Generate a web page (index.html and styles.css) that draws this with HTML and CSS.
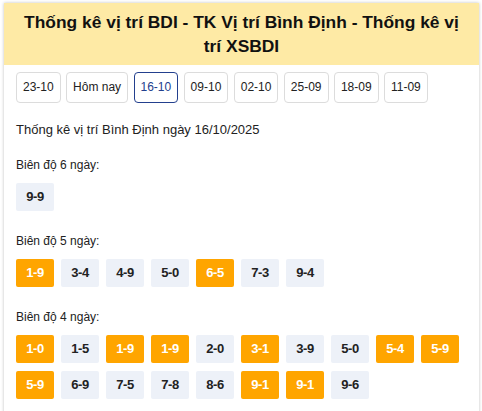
FILE: index.html
```html
<!DOCTYPE html>
<html lang="vi">
<head>
<meta charset="utf-8">
<title>Thống kê vị trí BDI</title>
<link rel="stylesheet" href="styles.css">
</head>
<body>
<div class="panel">
  <h1 class="title">Thống kê vị trí BDI - TK Vị trí Bình Định - Thống kê vị trí XSBDI</h1>
  <div class="content">
    <div class="dates">
      <a class="date">23-10</a>
      <a class="date">Hôm nay</a>
      <a class="date active">16-10</a>
      <a class="date">09-10</a>
      <a class="date">02-10</a>
      <a class="date">25-09</a>
      <a class="date">18-09</a>
      <a class="date">11-09</a>
    </div>
    <p class="heading">Thống kê vị trí Bình Định ngày 16/10/2025</p>
    <div class="group">
      <div class="label">Biên độ 6 ngày:</div>
      <div class="pairs">
        <span class="pair">9-9</span>
      </div>
    </div>
    <div class="group">
      <div class="label">Biên độ 5 ngày:</div>
      <div class="pairs">
        <span class="pair hot">1-9</span>
        <span class="pair">3-4</span>
        <span class="pair">4-9</span>
        <span class="pair">5-0</span>
        <span class="pair hot">6-5</span>
        <span class="pair">7-3</span>
        <span class="pair">9-4</span>
      </div>
    </div>
    <div class="group">
      <div class="label">Biên độ 4 ngày:</div>
      <div class="pairs">
        <span class="pair hot">1-0</span>
        <span class="pair">1-5</span>
        <span class="pair hot">1-9</span>
        <span class="pair hot">1-9</span>
        <span class="pair">2-0</span>
        <span class="pair hot">3-1</span>
        <span class="pair">3-9</span>
        <span class="pair">5-0</span>
        <span class="pair hot">5-4</span>
        <span class="pair hot">5-9</span>
        <span class="pair hot">5-9</span>
        <span class="pair">6-9</span>
        <span class="pair">7-5</span>
        <span class="pair">7-8</span>
        <span class="pair">8-6</span>
        <span class="pair hot">9-1</span>
        <span class="pair hot">9-1</span>
        <span class="pair">9-6</span>
      </div>
    </div>
  </div>
</div>
</body>
</html>
```
FILE: styles.css
```css
* { box-sizing: border-box; }
body {
  margin: 0;
  padding: 3px 3px 0 4px;
  font-family: "Liberation Sans", Arial, sans-serif;
  color: #222;
  background: #fff;
}
.panel {
  background: #fff;
  box-shadow: 0 0 3px rgba(0, 0, 0, 0.25);
  min-height: 420px;
}
.title {
  margin: 0;
  background: #feeaa5;
  font-size: 17.4px;
  font-weight: bold;
  line-height: 24px;
  text-align: center;
  padding: 7px 12px;
  color: #111;
}
.content {
  padding: 7px 12px 0 12px;
}
.dates {
  display: flex;
  flex-wrap: wrap;
  gap: 5.4px;
}
.date {
  display: block;
  height: 31px;
  line-height: 29px;
  padding: 0 6px;
  border: 1px solid #dcdcdc;
  border-radius: 4px;
  font-size: 12px;
  color: #222;
  text-align: center;
}
.date.active {
  border-color: #23408e;
  color: #23408e;
}
.heading {
  margin: 18px 0 17px;
  font-size: 13px;
  line-height: 18px;
}
.group {
  margin-bottom: 21px;
}
.label {
  font-size: 12px;
  line-height: 18px;
  margin-bottom: 9px;
}
.pairs {
  display: flex;
  flex-wrap: wrap;
  gap: 8px 7px;
}
.pair {
  width: 38px;
  height: 28px;
  line-height: 28px;
  text-align: center;
  background: #edf1f8;
  border-radius: 2px;
  font-size: 13px;
  font-weight: bold;
  letter-spacing: -0.5px;
  color: #222;
}
.pair.hot {
  background: #ffa500;
  color: #fff;
}
```
